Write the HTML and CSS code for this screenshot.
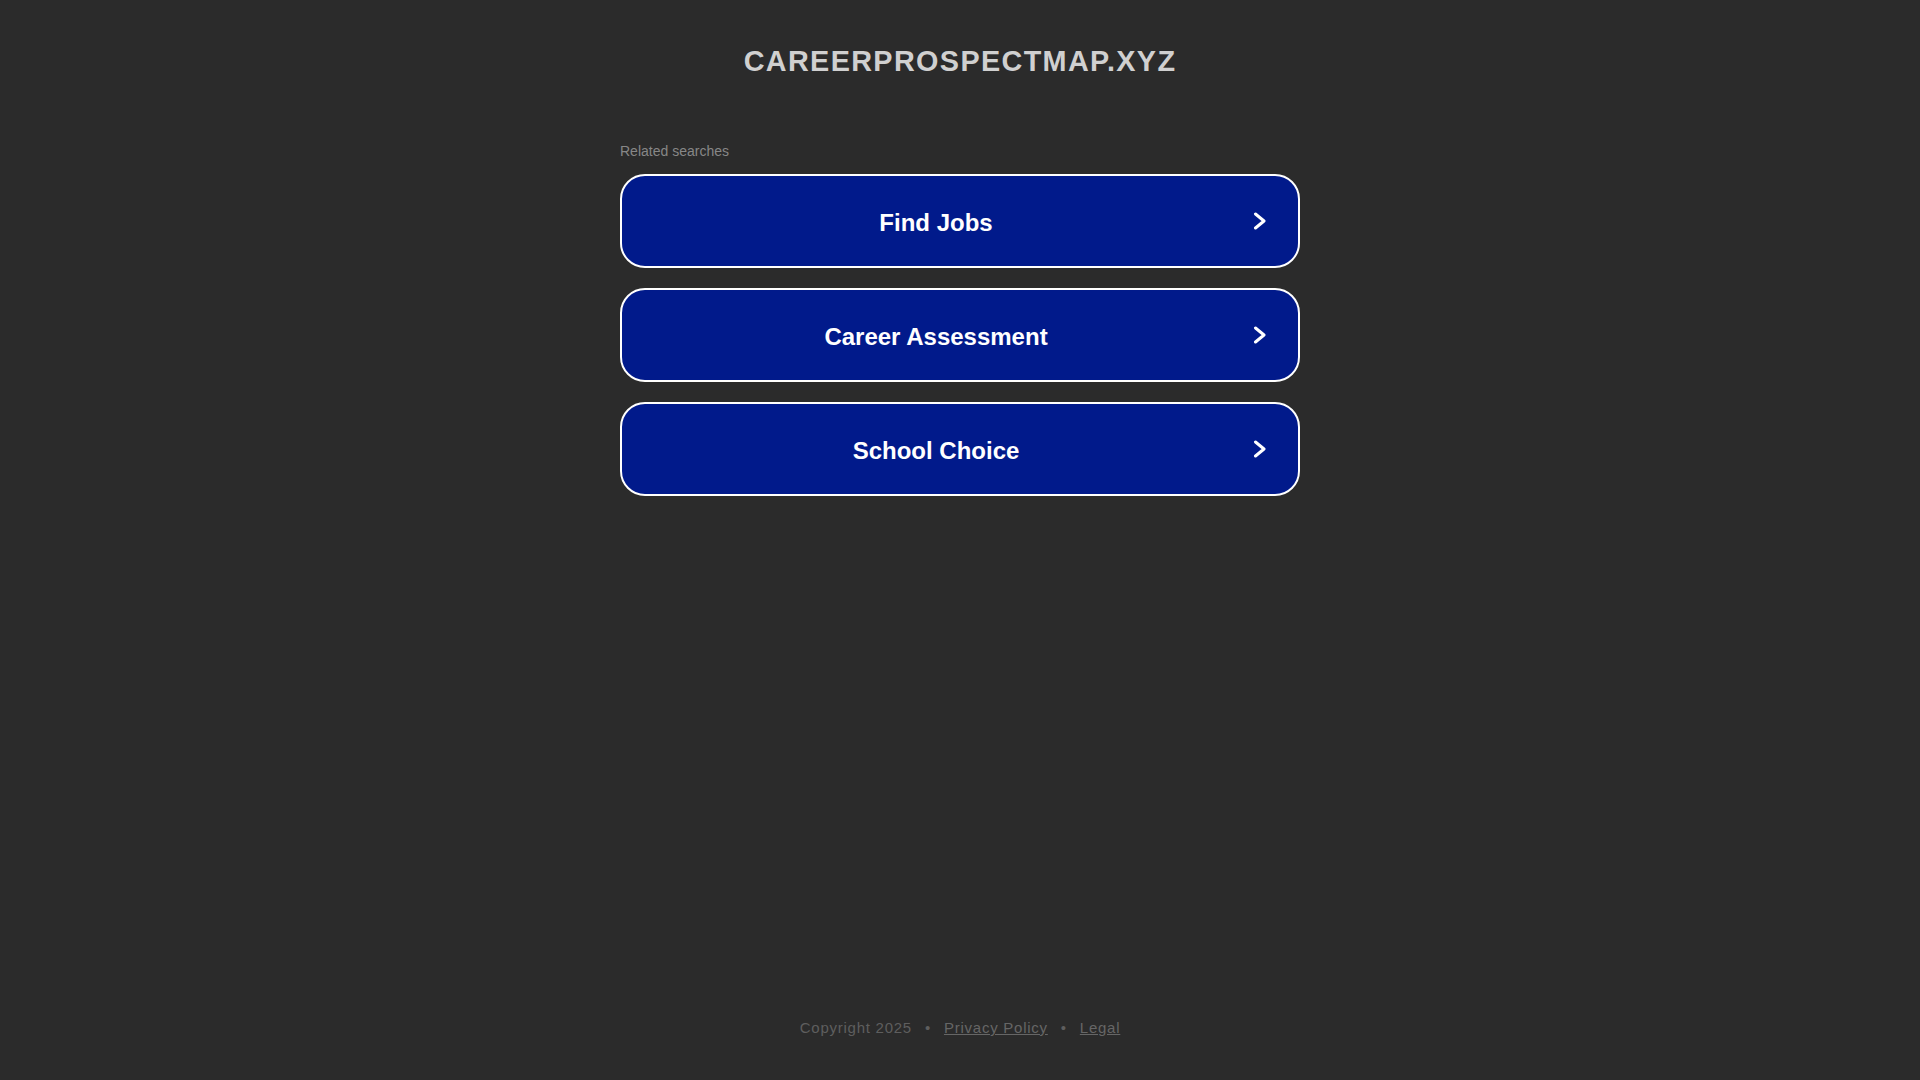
FILE: index.html
```html
<!DOCTYPE html>
<html lang="en">
<head>
<meta charset="utf-8">
<title>careerprospectmap.xyz</title>
<link rel="stylesheet" href="styles.css">
</head>
<body>
<div class="page">
  <header class="header">
    <h1 class="domain">careerprospectmap.xyz</h1>
  </header>
  <main class="main">
    <div class="related-label">Related searches</div>
    <div class="links">
      <a class="link-btn" href="#">
        <span class="link-text">Find Jobs</span>
        <svg class="chevron" width="16" height="20" viewBox="0 0 16 20"><polyline points="5.5,3 14,10 5.5,17" fill="none" stroke="#fff" stroke-width="3" stroke-linecap="round" stroke-linejoin="round"/></svg>
      </a>
      <a class="link-btn" href="#">
        <span class="link-text">Career Assessment</span>
        <svg class="chevron" width="16" height="20" viewBox="0 0 16 20"><polyline points="5.5,3 14,10 5.5,17" fill="none" stroke="#fff" stroke-width="3" stroke-linecap="round" stroke-linejoin="round"/></svg>
      </a>
      <a class="link-btn" href="#">
        <span class="link-text">School Choice</span>
        <svg class="chevron" width="16" height="20" viewBox="0 0 16 20"><polyline points="5.5,3 14,10 5.5,17" fill="none" stroke="#fff" stroke-width="3" stroke-linecap="round" stroke-linejoin="round"/></svg>
      </a>
    </div>
  </main>
  <footer class="footer">
    <span class="copy">Copyright 2025</span>
    <span class="dot">•</span>
    <a class="foot-link" href="#">Privacy Policy</a>
    <span class="dot">•</span>
    <a class="foot-link" href="#">Legal</a>
  </footer>
</div>
</body>
</html>
```
FILE: styles.css
```css
html, body {
  margin: 0;
  padding: 0;
  background: #2b2b2b;
  font-family: "Liberation Sans", Arial, sans-serif;
}

.page {
  min-height: 100vh;
  display: flex;
  flex-direction: column;
  align-items: center;
}

.header {
  padding-top: 44px;
}

.domain {
  margin: 0;
  font-size: 28.8px;
  line-height: 34.56px;
  font-weight: bold;
  text-transform: uppercase;
  letter-spacing: 1.35px;
  color: #d0d0d0;
  text-align: center;
}

.main {
  width: 680px;
  margin-top: 64px;
}

.related-label {
  font-size: 14px;
  line-height: 16px;
  color: #878787;
}

.links {
  margin-top: 15px;
  display: flex;
  flex-direction: column;
  gap: 20px;
}

.link-btn {
  box-sizing: border-box;
  height: 94px;
  display: flex;
  align-items: center;
  padding: 2px 32px 0 0;
  background: #011a8b;
  border: 2px solid #ffffff;
  border-radius: 25px;
  color: #ffffff;
  text-decoration: none;
}

.link-text {
  flex: 1;
  text-align: center;
  font-size: 24px;
  font-weight: bold;
  padding: 2px 0 0 2px;
}

.chevron {
  display: block;
  margin: -1px 0 0 2px;
  flex: none;
}

.footer {
  margin-top: auto;
  padding-bottom: 44px;
  display: flex;
  align-items: center;
  font-size: 15px;
  line-height: 16px;
  letter-spacing: 0.75px;
  color: #5e5e5e;
}

.dot {
  margin: 0 13px;
}

.foot-link {
  color: #666666;
  text-decoration: underline;
}
```
